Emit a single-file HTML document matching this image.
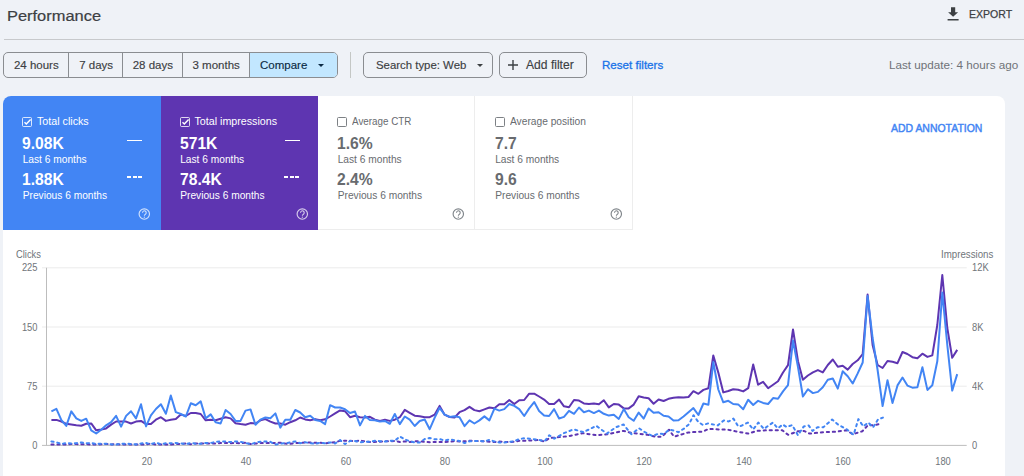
<!DOCTYPE html>
<html><head><meta charset="utf-8">
<style>
*{box-sizing:border-box;margin:0;padding:0}
html,body{width:1024px;height:476px;overflow:hidden;background:#eff2f7;font-family:"Liberation Sans",sans-serif;position:relative}
.a{position:absolute;white-space:nowrap;line-height:1}
.title{left:7px;top:7.9px;font-size:15.1px;color:#3c4043;transform:scaleX(1.088);transform-origin:0 0;-webkit-text-stroke:0.2px #3c4043}
.hr{left:4px;top:39px;width:1020px;height:1px;background:#c7c9cc}
.seg{left:3px;top:52px;width:335px;height:26px;border:1px solid #8a8d91;border-radius:5px;overflow:hidden}
.seg .b{position:absolute;top:0;height:24px;border-right:1px solid #8a8d91}
.seg .t{position:absolute;top:6.5px;-webkit-text-stroke:0.15px currentColor;font-size:11.5px;line-height:1;color:#3c4043;white-space:nowrap}
.sep{left:350px;top:52px;width:1px;height:26px;background:#c4c7c5}
.chip{top:52px;height:26px;border:1px solid #8a8d91;border-radius:5px}
.tri{width:0;height:0;border-left:3.5px solid transparent;border-right:3.5px solid transparent;border-top:3.5px solid #3c4043}
.card{left:3px;top:96px;width:1002.3px;height:420px;background:#fff;border-radius:8px;overflow:hidden}
.m{position:absolute;top:0;height:133.6px}
.w{color:#fff}
.g{color:#686b6f}
.mt{font-size:10.7px}
.mv{font-size:17px;font-weight:bold;transform:scaleX(0.92);transform-origin:0 0}
.ms{font-size:10.2px}
.cb{position:absolute;width:10px;height:10px;border-radius:1.5px}
.lab{font-size:10.5px;color:#70757a;transform:scaleX(0.89)}
</style></head><body>
<div class="a title">Performance</div>
<div class="a hr"></div>
<svg class="a" style="left:947px;top:7px" width="12" height="14" viewBox="0 0 12 14"><path d="M4 0.2h4.2v5.1h2.9L6.1 9.8 1.1 5.3H4z" fill="#3c4043"/><rect x="0.6" y="12" width="11" height="1.5" fill="#3c4043"/></svg>
<div class="a" style="left:969px;top:8.6px;font-size:11.4px;color:#3c4043;transform:scaleX(0.925);transform-origin:0 0;-webkit-text-stroke:0.25px #3c4043">EXPORT</div>

<div class="a seg">
  <div class="b" style="left:0;width:65px"></div><div class="t" style="left:9.9px">24 hours</div>
  <div class="b" style="left:65px;width:54px"></div><div class="t" style="left:75.2px">7 days</div>
  <div class="b" style="left:119px;width:60px"></div><div class="t" style="left:128.7px">28 days</div>
  <div class="b" style="left:179px;width:67px;"></div><div class="t" style="left:188.5px">3 months</div>
  <div class="b" style="left:246px;width:90px;background:#c2e7ff;border-right:none"></div><div class="t" style="left:256px;color:#0b2a44">Compare</div>
  <div class="tri" style="position:absolute;left:314px;top:11px;border-top-color:#0b2a44"></div>
</div>
<div class="a sep"></div>
<div class="a chip" style="left:363px;width:130px"><span class="a" style="left:12px;top:6.5px;font-size:11.4px;color:#3c4043;-webkit-text-stroke:0.15px #3c4043">Search type: Web</span><div class="tri" style="position:absolute;left:113px;top:11px"></div></div>
<div class="a chip" style="left:499px;width:88px">
  <svg style="position:absolute;left:8px;top:7px" width="10" height="10" viewBox="0 0 10 10"><path d="M4.3 0h1.4v10H4.3z M0 4.3h10v1.4H0z" fill="#3c4043"/></svg>
  <span class="a" style="left:26px;top:6.3px;font-size:12.1px;color:#3c4043;-webkit-text-stroke:0.15px #3c4043">Add filter</span></div>
<div class="a" style="left:602px;top:58.6px;font-size:11.6px;color:#1a73e8;-webkit-text-stroke:0.3px #1a73e8">Reset filters</div>
<div class="a" style="left:889px;top:58.7px;font-size:11.7px;color:#6f7378">Last update: 4 hours ago</div>

<div class="a card">
  <div class="m" style="left:0;width:158px;background:#4285f4"></div>
  <div class="m" style="left:158px;width:157px;background:#5e35b1"></div>
  <div class="m" style="left:315px;width:157px;border-right:1px solid #ededed;border-bottom:1px solid #ededed"></div>
  <div class="m" style="left:472px;width:158px;border-right:1px solid #ededed;border-bottom:1px solid #ededed"></div>
</div>

<!-- metric texts (page coordinates) -->
<div class="cb" style="left:22px;top:116.5px;border:1.2px solid rgba(255,255,255,0.8)"><svg width="8" height="8" style="position:absolute;left:0;top:0;overflow:visible" viewBox="0 0 8 8"><path d="M1.5 4.3 3.3 6 7.6 1.4" fill="none" stroke="#fff" stroke-width="1.4"/></svg></div>
<div class="a w mt" style="left:37.0px;top:116.3px">Total clicks</div>
<div class="a w mv" style="left:22.1px;top:135.0px">9.08K</div>
<div class="a w ms" style="left:22.7px;top:154.8px">Last 6 months</div>
<div class="a w mv" style="left:22.1px;top:171.3px">1.88K</div>
<div class="a w ms" style="left:22.7px;top:191.1px">Previous 6 months</div>
<div class="a" style="left:127px;top:139.5px;width:15px;height:1.6px;background:#fff"></div>
<div class="a" style="left:126.7px;top:176px;width:15.5px;height:1.6px;background:repeating-linear-gradient(90deg,#fff 0 3.9px,transparent 3.9px 5.75px)"></div>
<svg class="a" style="left:138px;top:208px" width="13" height="13" viewBox="0 0 13 13"><circle cx="6.3" cy="6" r="5.2" fill="none" stroke="rgba(255,255,255,0.75)" stroke-width="1.15"/><path d="M4.5 4.7a1.85 1.85 0 1 1 2.9 1.5c-0.7 0.45-1.05 0.75-1.05 1.6" fill="none" stroke="rgba(255,255,255,0.75)" stroke-width="1.1"/><circle cx="6.35" cy="9.15" r="0.65" fill="rgba(255,255,255,0.75)"/></svg>

<div class="cb" style="left:179.5px;top:116.5px;border:1.2px solid rgba(255,255,255,0.8)"><svg width="8" height="8" style="position:absolute;left:0;top:0;overflow:visible" viewBox="0 0 8 8"><path d="M1.5 4.3 3.3 6 7.6 1.4" fill="none" stroke="#fff" stroke-width="1.4"/></svg></div>
<div class="a w mt" style="left:194.5px;top:116.3px">Total impressions</div>
<div class="a w mv" style="left:179.6px;top:135.0px">571K</div>
<div class="a w ms" style="left:180.2px;top:154.8px">Last 6 months</div>
<div class="a w mv" style="left:179.6px;top:171.3px">78.4K</div>
<div class="a w ms" style="left:180.2px;top:191.1px">Previous 6 months</div>
<div class="a" style="left:284.5px;top:139.5px;width:15px;height:1.6px;background:#fff"></div>
<div class="a" style="left:284.2px;top:176px;width:15.5px;height:1.6px;background:repeating-linear-gradient(90deg,#fff 0 3.9px,transparent 3.9px 5.75px)"></div>
<svg class="a" style="left:295.5px;top:208px" width="13" height="13" viewBox="0 0 13 13"><circle cx="6.3" cy="6" r="5.2" fill="none" stroke="rgba(255,255,255,0.75)" stroke-width="1.15"/><path d="M4.5 4.7a1.85 1.85 0 1 1 2.9 1.5c-0.7 0.45-1.05 0.75-1.05 1.6" fill="none" stroke="rgba(255,255,255,0.75)" stroke-width="1.1"/><circle cx="6.35" cy="9.15" r="0.65" fill="rgba(255,255,255,0.75)"/></svg>

<div class="cb" style="left:337px;top:116.5px;border:1.1px solid #7d8185"></div>
<div class="a g mt" style="left:352.0px;top:116.3px;transform:scaleX(0.92);transform-origin:0 0">Average CTR</div>
<div class="a g mv" style="left:337.1px;top:135.0px">1.6%</div>
<div class="a g ms" style="left:337.7px;top:154.8px">Last 6 months</div>
<div class="a g mv" style="left:337.1px;top:171.3px">2.4%</div>
<div class="a g ms" style="left:337.7px;top:191.1px">Previous 6 months</div>
<svg class="a" style="left:452px;top:208px" width="13" height="13" viewBox="0 0 13 13"><circle cx="6.3" cy="6" r="5.2" fill="none" stroke="#80868b" stroke-width="1.15"/><path d="M4.5 4.7a1.85 1.85 0 1 1 2.9 1.5c-0.7 0.45-1.05 0.75-1.05 1.6" fill="none" stroke="#80868b" stroke-width="1.1"/><circle cx="6.35" cy="9.15" r="0.65" fill="#80868b"/></svg>

<div class="cb" style="left:494.5px;top:116.5px;border:1.1px solid #7d8185"></div>
<div class="a g mt" style="left:509.5px;top:116.3px;transform:scaleX(0.955);transform-origin:0 0">Average position</div>
<div class="a g mv" style="left:494.6px;top:135.0px">7.7</div>
<div class="a g ms" style="left:495.2px;top:154.8px">Last 6 months</div>
<div class="a g mv" style="left:494.6px;top:171.3px">9.6</div>
<div class="a g ms" style="left:495.2px;top:191.1px">Previous 6 months</div>
<svg class="a" style="left:609.5px;top:208px" width="13" height="13" viewBox="0 0 13 13"><circle cx="6.3" cy="6" r="5.2" fill="none" stroke="#80868b" stroke-width="1.15"/><path d="M4.5 4.7a1.85 1.85 0 1 1 2.9 1.5c-0.7 0.45-1.05 0.75-1.05 1.6" fill="none" stroke="#80868b" stroke-width="1.1"/><circle cx="6.35" cy="9.15" r="0.65" fill="#80868b"/></svg>

<div class="a" style="left:891px;top:122.6px;font-size:11px;color:#4285f4;transform:scaleX(0.95);transform-origin:0 0;-webkit-text-stroke:0.45px #4285f4">ADD ANNOTATION</div>

<!-- chart labels -->
<div class="a lab" style="left:16.2px;top:248.8px;transform-origin:0 0">Clicks</div>
<div class="a lab" style="left:941px;top:249.0px;transform-origin:0 0;transform:scaleX(0.925)">Impressions</div>
<div class="a lab" style="left:0;width:37.5px;text-align:right;top:262.4px;transform-origin:100% 0">225</div>
<div class="a lab" style="left:0;width:37.5px;text-align:right;top:321.6px;transform-origin:100% 0">150</div>
<div class="a lab" style="left:0;width:37.5px;text-align:right;top:380.8px;transform-origin:100% 0">75</div>
<div class="a lab" style="left:0;width:37.5px;text-align:right;top:440.0px;transform-origin:100% 0">0</div>
<div class="a lab" style="left:971.8px;top:262.4px;transform-origin:0 0">12K</div>
<div class="a lab" style="left:971.8px;top:321.6px;transform-origin:0 0">8K</div>
<div class="a lab" style="left:971.8px;top:380.8px;transform-origin:0 0">4K</div>
<div class="a lab" style="left:971.8px;top:440.0px;transform-origin:0 0">0</div>
<div class="a lab" style="left:126.5px;width:40px;text-align:center;top:455.9px;transform-origin:50% 0">20</div>
<div class="a lab" style="left:226.0px;width:40px;text-align:center;top:455.9px;transform-origin:50% 0">40</div>
<div class="a lab" style="left:325.5px;width:40px;text-align:center;top:455.9px;transform-origin:50% 0">60</div>
<div class="a lab" style="left:425.1px;width:40px;text-align:center;top:455.9px;transform-origin:50% 0">80</div>
<div class="a lab" style="left:524.6px;width:40px;text-align:center;top:455.9px;transform-origin:50% 0">100</div>
<div class="a lab" style="left:624.2px;width:40px;text-align:center;top:455.9px;transform-origin:50% 0">120</div>
<div class="a lab" style="left:723.7px;width:40px;text-align:center;top:455.9px;transform-origin:50% 0">140</div>
<div class="a lab" style="left:823.2px;width:40px;text-align:center;top:455.9px;transform-origin:50% 0">160</div>
<div class="a lab" style="left:922.8px;width:40px;text-align:center;top:455.9px;transform-origin:50% 0">180</div>
<svg width="1024" height="476" style="position:absolute;left:0;top:0">
<line x1="42" y1="267.8" x2="966.7" y2="267.8" stroke="#ebebeb" stroke-width="1"/>
<line x1="42" y1="327.0" x2="966.7" y2="327.0" stroke="#ebebeb" stroke-width="1"/>
<line x1="42" y1="386.2" x2="966.7" y2="386.2" stroke="#ebebeb" stroke-width="1"/>
<line x1="42" y1="445.4" x2="966.7" y2="445.4" stroke="#bdbdbd" stroke-width="1"/>
<line x1="46.5" y1="267.8" x2="46.5" y2="445.4" stroke="#bdbdbd" stroke-width="1"/>
<polyline points="51.4,444.5 56.4,444.4 61.4,444.6 66.3,444.6 71.3,444.1 76.3,444.1 81.3,444.2 86.2,444.2 91.2,444.6 96.2,444.6 101.2,444.3 106.1,443.9 111.1,444.4 116.1,444.3 121.1,444.6 126.1,444.6 131.0,444.6 136.0,444.4 141.0,444.5 146.0,444.5 150.9,443.6 155.9,444.6 160.9,444.6 165.9,444.6 170.8,444.6 175.8,444.0 180.8,444.0 185.8,443.5 190.8,444.2 195.7,443.4 200.7,443.4 205.7,443.5 210.7,443.4 215.6,443.6 220.6,443.1 225.6,443.0 230.6,443.2 235.5,443.0 240.5,443.4 245.5,442.8 250.5,444.0 255.5,443.6 260.4,442.9 265.4,443.0 270.4,443.1 275.4,443.0 280.3,442.7 285.3,443.6 290.3,443.8 295.3,443.0 300.2,443.0 305.2,442.4 310.2,442.4 315.2,442.8 320.2,442.7 325.1,443.5 330.1,442.5 335.1,442.3 340.1,440.8 345.0,440.7 350.0,440.7 355.0,441.3 360.0,440.6 365.0,441.3 369.9,442.0 374.9,441.9 379.9,441.7 384.9,441.1 389.8,441.3 394.8,441.0 399.8,441.9 404.8,441.5 409.7,441.9 414.7,441.3 419.7,441.1 424.7,441.9 429.7,442.2 434.6,442.0 439.6,441.9 444.6,441.9 449.6,441.8 454.5,441.1 459.5,441.5 464.5,441.3 469.5,440.8 474.4,440.8 479.4,441.2 484.4,441.2 489.4,441.8 494.4,442.1 499.3,441.4 504.3,442.0 509.3,442.0 514.3,441.8 519.2,440.8 520.0,441.0 539.5,440.0 544.4,441.6 549.3,438.1 559.1,437.1 568.8,436.1 582.5,433.2 596.2,435.2 607.9,434.2 623.5,430.9 631.3,432.8 647.6,434.8 655.1,436.7 662.0,436.7 669.0,429.7 674.0,436.7 680.3,434.8 687.9,432.6 695.4,431.9 703.0,431.6 708.7,428.8 715.6,429.3 727.6,429.7 735.4,431.3 748.1,433.6 756.9,430.9 766.6,430.3 782.3,430.3 788.1,434.8 797.9,431.3 803.8,430.9 809.6,433.6 823.3,432.2 835.0,431.8 846.7,430.3 852.6,434.2 862.3,431.3 868.2,425.0 874.1,425.4 879.9,423.8" fill="none" stroke="#5e35b1" stroke-width="2" stroke-dasharray="2.2,3.8" stroke-linecap="round" stroke-linejoin="round"/>
<polyline points="51.4,441.5 56.4,442.3 61.4,444.0 66.3,442.9 71.3,443.6 76.3,443.2 81.3,442.5 86.2,443.4 91.2,442.9 96.2,444.0 101.2,443.6 106.1,443.7 111.1,444.3 116.1,444.6 121.1,443.7 126.1,443.6 131.0,444.1 136.0,444.4 141.0,443.5 146.0,443.0 150.9,444.2 155.9,442.6 160.9,444.2 165.9,443.3 170.8,443.2 175.8,443.1 180.8,443.3 185.8,444.2 190.8,443.0 195.7,443.7 200.7,443.7 205.7,442.9 210.7,443.0 215.6,441.8 220.6,441.5 225.6,441.5 230.6,442.1 235.5,441.5 240.5,441.8 245.5,442.9 250.5,444.3 255.5,442.6 260.4,441.7 265.4,441.5 270.4,441.8 275.4,444.6 280.3,443.7 285.3,443.2 290.3,442.5 295.3,441.4 300.2,443.2 305.2,442.3 310.2,443.2 315.2,443.8 320.2,442.7 325.1,443.3 330.1,442.4 335.1,443.5 340.1,440.1 345.0,444.1 350.0,441.0 355.0,441.0 360.0,442.3 365.0,441.9 369.9,441.6 374.9,440.8 379.9,441.2 384.9,441.5 389.8,440.7 394.8,440.9 399.8,436.4 404.8,439.4 409.7,441.2 414.7,442.4 419.7,442.5 424.7,439.1 429.7,438.0 434.6,439.3 439.6,439.0 444.6,440.6 449.6,439.4 454.5,440.2 459.5,440.9 464.5,443.1 469.5,441.3 474.4,441.0 479.4,440.8 484.4,441.4 489.4,439.8 494.4,441.5 499.3,442.5 504.3,442.5 509.3,441.8 514.3,441.2 519.2,439.0 524.1,438.3 529.8,438.7 539.5,440.0 544.4,441.4 549.3,435.2 554.2,438.7 563.9,433.2 573.7,429.3 583.5,432.2 596.2,425.8 606.9,433.6 615.7,427.3 623.5,424.4 631.3,434.2 639.1,428.3 643.8,431.6 652.6,436.0 658.9,433.5 663.9,434.1 669.0,429.7 673.4,430.4 678.4,432.2 684.1,428.5 689.1,424.1 693.5,415.2 698.0,421.5 703.0,425.1 708.0,423.4 714.3,424.7 717.8,425.4 723.7,420.5 728.6,421.5 733.4,418.6 738.3,426.4 741.3,425.8 747.9,422.6 753.2,429.5 758.3,422.6 763.9,428.9 772.8,422.6 777.8,428.3 782.8,424.5 786.6,427.0 792.3,425.1 797.9,435.2 803.8,426.4 808.6,425.4 812.5,430.9 817.4,427.3 823.3,427.3 832.1,419.5 837.9,424.4 846.7,429.3 853.6,434.8 858.4,419.1 863.3,426.4 868.2,422.5 873.1,427.3 878.0,419.5 882.9,417.6" fill="none" stroke="#4285f4" stroke-width="2" stroke-dasharray="2.2,3.8" stroke-linecap="round" stroke-linejoin="round"/>
<polyline points="51.4,419.9 56.4,419.9 61.4,421.5 66.3,423.8 71.3,424.6 76.3,425.3 81.3,425.7 86.2,423.8 91.2,423.4 96.2,430.3 101.2,429.4 106.1,428.4 111.1,424.6 116.1,421.5 121.1,421.6 126.1,421.6 131.0,423.5 136.0,421.6 141.0,420.9 146.0,424.1 150.9,424.1 155.9,419.7 160.9,417.2 165.9,420.9 170.8,419.7 175.8,419.1 180.8,414.6 185.8,415.9 190.8,413.0 195.7,413.0 200.7,414.0 205.7,420.3 210.7,419.7 215.6,420.3 220.6,418.8 225.6,417.2 230.6,418.4 235.5,423.2 240.5,424.1 245.5,424.7 250.5,423.1 255.5,423.5 260.4,420.3 265.4,419.1 270.4,421.6 275.4,423.5 280.3,423.5 285.3,424.7 290.3,422.2 295.3,420.3 300.2,417.5 305.2,419.4 310.2,420.3 315.2,419.1 320.2,420.3 325.1,419.3 330.1,416.5 335.1,413.4 340.1,410.4 345.0,411.2 350.0,417.2 355.0,415.7 360.0,417.2 365.0,417.5 369.9,416.8 374.9,419.7 379.9,420.9 384.9,419.7 389.8,420.9 394.8,419.7 399.8,417.2 404.8,409.9 409.7,412.8 414.7,415.7 419.7,416.2 424.7,417.2 429.7,417.2 434.6,414.7 439.6,405.9 444.6,414.7 449.6,417.0 454.5,417.6 459.5,412.2 464.5,410.1 469.5,406.8 474.4,410.1 479.4,411.3 484.4,409.4 489.4,407.5 494.4,408.2 499.3,404.3 504.3,404.3 509.3,400.0 514.3,404.0 519.2,400.2 524.2,400.0 529.2,393.7 534.2,393.7 539.1,396.5 544.1,399.6 549.1,404.0 554.1,404.0 559.1,399.6 564.0,406.3 569.0,407.3 574.0,400.0 579.0,400.6 583.9,403.4 588.9,404.0 593.9,403.4 598.9,404.3 603.8,400.2 608.8,407.4 613.8,404.0 618.8,404.6 623.8,408.4 628.7,408.4 633.7,404.6 638.7,396.2 643.7,397.5 648.6,398.3 653.6,403.7 658.6,399.5 663.6,401.0 668.5,398.8 673.5,397.8 678.5,397.2 683.5,397.4 688.5,397.0 693.4,391.2 698.4,393.8 703.4,389.9 708.4,388.2 713.3,355.5 718.3,372.6 723.3,392.4 728.3,391.0 733.2,389.3 738.2,389.7 743.2,391.4 748.2,388.2 753.2,364.5 758.1,384.7 763.1,381.9 768.1,388.2 773.1,384.7 778.0,381.3 783.0,372.5 788.0,365.1 793.0,329.5 798.0,361.2 802.9,379.7 807.9,375.5 812.9,372.4 817.9,370.1 822.8,372.4 827.8,365.0 832.8,359.5 837.8,366.7 842.7,365.7 847.7,369.6 852.7,364.0 857.7,360.3 862.7,354.0 867.6,294.5 872.6,345.0 877.6,365.0 882.6,368.0 887.5,361.0 892.5,361.8 897.5,363.2 902.5,352.0 907.4,354.0 912.4,357.2 917.4,358.2 922.4,353.7 927.4,356.9 932.3,355.4 937.3,325.0 942.3,275.0 947.3,328.0 952.2,357.8 957.2,349.9" fill="none" stroke="#5e35b1" stroke-width="2" stroke-linejoin="round"/>
<polyline points="51.4,411.4 56.4,408.9 61.4,420.2 66.3,425.9 71.3,411.4 76.3,418.3 81.3,420.9 86.2,418.7 91.2,430.3 96.2,433.5 101.2,429.7 106.1,425.3 111.1,422.1 116.1,415.9 121.1,426.6 126.1,415.9 131.0,411.2 136.0,418.4 141.0,404.3 146.0,426.4 150.9,415.3 155.9,409.0 160.9,404.3 165.9,413.8 170.8,395.5 175.8,412.1 180.8,414.0 185.8,416.5 190.8,403.3 195.7,405.2 200.7,401.4 205.7,418.4 210.7,414.4 215.6,422.2 220.6,423.5 225.6,410.0 230.6,414.0 235.5,420.9 240.5,420.9 245.5,410.6 250.5,409.4 255.5,424.7 260.4,419.7 265.4,417.5 270.4,418.2 275.4,413.4 280.3,427.6 285.3,419.7 290.3,419.7 295.3,410.0 300.2,412.5 305.2,417.2 310.2,415.7 315.2,420.1 320.2,420.9 325.1,424.1 330.1,405.2 335.1,407.5 340.1,407.5 345.0,409.2 350.0,413.0 355.0,411.5 360.0,425.4 365.0,415.9 369.9,420.1 374.9,420.3 379.9,421.6 384.9,420.9 389.8,423.8 394.8,414.0 399.8,424.1 404.8,416.5 409.7,419.7 414.7,426.0 419.7,421.0 424.7,419.5 429.7,429.2 434.6,417.9 439.6,407.8 444.6,414.7 449.6,416.9 454.5,416.2 459.5,417.2 464.5,426.1 469.5,420.4 474.4,423.5 479.4,420.4 484.4,416.4 489.4,420.4 494.4,408.6 499.3,410.6 504.3,409.1 509.3,404.0 514.3,405.9 519.2,409.1 524.2,416.0 529.2,408.4 534.2,402.1 539.1,410.9 544.1,415.4 549.1,416.0 554.1,409.1 559.1,418.5 564.0,416.9 569.0,410.8 574.0,413.8 579.0,407.5 583.9,412.2 588.9,410.6 593.9,413.1 598.9,410.6 603.8,413.8 608.8,415.6 613.8,414.7 618.8,418.9 623.8,409.1 628.7,417.2 633.7,420.8 638.7,412.6 643.7,418.6 648.6,408.5 653.6,412.8 658.6,412.2 663.6,415.8 668.5,416.4 673.5,420.5 678.5,420.2 683.5,416.5 688.5,412.2 693.4,408.1 698.4,415.0 703.4,403.5 708.4,404.8 713.3,362.0 718.3,389.5 723.3,402.3 728.3,400.8 733.2,404.0 738.2,404.4 743.2,409.2 748.2,399.8 753.2,405.0 758.1,400.8 763.1,402.9 768.1,404.0 773.1,398.1 778.0,398.7 783.0,391.4 788.0,385.1 793.0,340.5 798.0,367.1 802.9,396.5 807.9,389.2 812.9,393.1 817.9,391.9 822.8,387.2 827.8,379.7 832.8,378.5 837.8,388.6 842.7,371.3 847.7,376.3 852.7,383.5 857.7,373.4 862.7,362.5 867.6,296.0 872.6,338.0 877.6,370.0 882.6,406.0 887.5,380.3 892.5,403.0 897.5,385.4 902.5,377.5 907.4,385.6 912.4,387.7 917.4,387.2 922.4,367.2 927.4,389.9 932.3,385.3 937.3,361.2 942.3,292.5 947.3,345.0 952.2,390.6 957.2,374.1" fill="none" stroke="#4285f4" stroke-width="2" stroke-linejoin="round"/>
</svg>
</body></html>
